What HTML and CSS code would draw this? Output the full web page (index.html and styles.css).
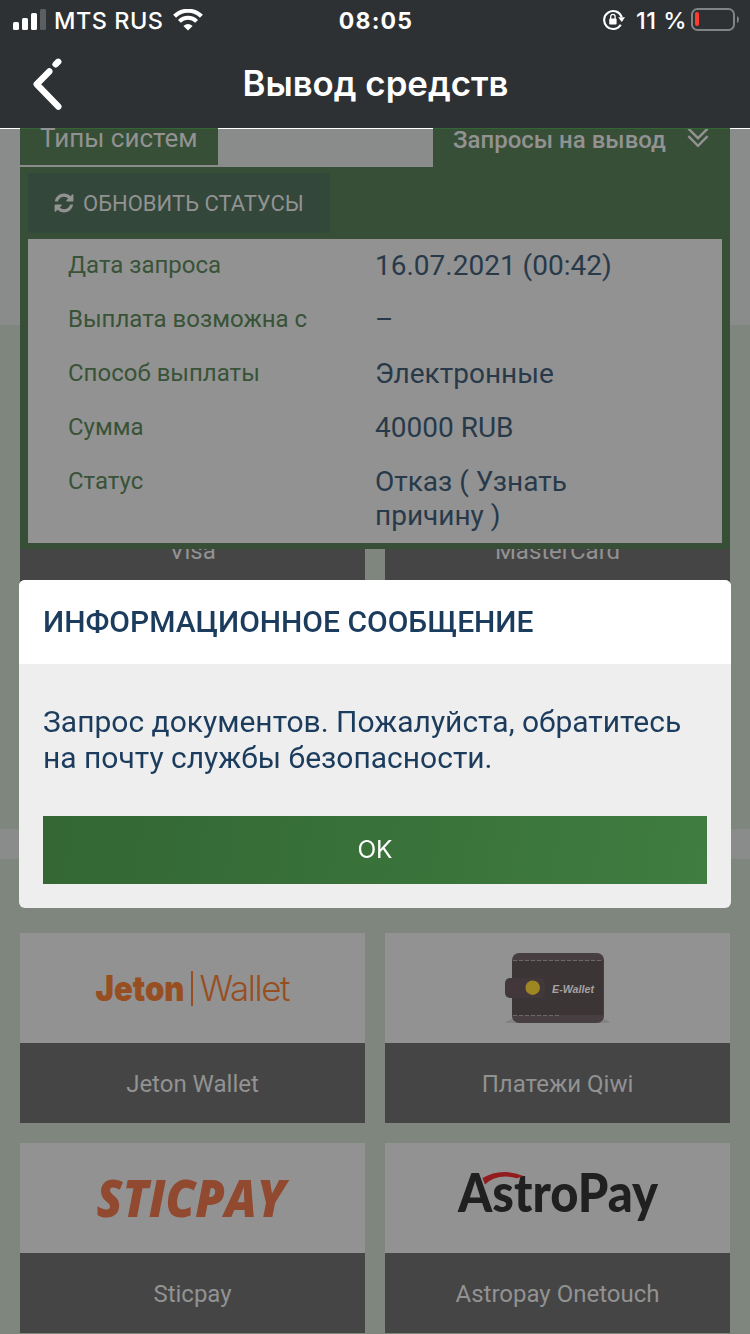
FILE: index.html
```
<!DOCTYPE html>
<html lang="ru">
<head>
  <meta charset="utf-8">
  <title>Вывод средств</title>
  <link rel="stylesheet" href="styles.css">
</head>
<body>
  <header class="header">
    <div class="status">
      <div class="status-left">
        <svg class="signal" width="34" height="22" viewBox="0 0 34 22">
          <rect x="0" y="13" width="6" height="8" rx="1.5" fill="#fff"/>
          <rect x="9" y="9" width="6" height="12" rx="1.5" fill="#fff"/>
          <rect x="18" y="4" width="6" height="17" rx="1.5" fill="#fff"/>
          <rect x="27" y="0" width="6" height="21" rx="1.5" fill="#5b5f61"/>
        </svg>
        <span class="carrier">MTS RUS</span>
        <svg class="wifi" width="30" height="22" viewBox="0 0 30 22" fill="none" stroke="#fff">
          <path d="M1.6 7.3 A19 19 0 0 1 28.4 7.3" stroke-width="4.2"/>
          <path d="M6.4 12.3 A12.2 12.2 0 0 1 23.6 12.3" stroke-width="4"/>
          <path d="M15 21.6 L10.4 17 Q15 12.9 19.6 17 Z" fill="#fff" stroke="none"/>
        </svg>
      </div>
      <div class="clock">08:05</div>
      <div class="status-right">
        <svg class="lock" width="22" height="22" viewBox="0 0 22 22">
          <path d="M17.8 15.8 A9 9 0 1 1 18.7 8.2" fill="none" stroke="#fff" stroke-width="2.1"/>
          <path d="M15.2 8.3 L22 8.3 L18.8 13 Z" fill="#fff"/>
          <rect x="6.2" y="9.4" width="7.4" height="6" rx="1" fill="#fff"/>
          <path d="M7.7 10 V7.6 a2.2 2.2 0 0 1 4.4 0 V10" fill="none" stroke="#fff" stroke-width="1.3"/>
        </svg>
        <span class="percent">11 %</span>
        <svg class="battery" width="48" height="24" viewBox="0 0 48 24">
          <rect x="1" y="1" width="42" height="21" rx="5.5" fill="none" stroke="#818485" stroke-width="2"/>
          <rect x="4" y="4" width="4" height="14" rx="2" fill="#fd3c2f"/>
          <path d="M46 8 q2 1 2 3.5 t-2 3.5z" fill="#818485"/>
        </svg>
      </div>
    </div>
    <div class="nav">
      <svg class="back" width="30" height="52" viewBox="0 0 30 52" fill="none" stroke="#fff" stroke-width="6.4" stroke-linecap="round" stroke-linejoin="round">
        <path d="M16.3 13.4 L3.7 26.3 L25.3 48.6"/>
        <path d="M22.7 6.3 L25.2 3.8"/>
      </svg>
      <h1 class="title">Вывод средств</h1>
    </div>
  </header>

  <main class="page">
    <div class="requests">
      <div class="tabs">
        <div class="tab">Типы систем</div>
        <div class="tab tab-active">
          <span>Запросы на вывод</span>
          <svg width="22" height="19" viewBox="0 1 22 19" fill="none" stroke="#929292" stroke-width="2.4">
            <path d="M1.4 0.6 L11 10.2 L20.6 0.6"/>
            <path d="M1.4 8.2 L11 17.8 L20.6 8.2"/>
          </svg>
        </div>
      </div>
      <div class="panel">
        <div class="refresh">
          <svg width="20" height="22" viewBox="0 0 1536 1792" fill="#929292">
            <path d="M1511 1056q0 5-1 7-64 268-268 434.5t-478 166.5q-146 0-282.5-55t-243.5-157l-129 129q-19 19-45 19t-45-19-19-45v-448q0-26 19-45t45-19h448q26 0 45 19t19 45-19 45l-137 137q71 66 161 102t187 36q134 0 250-65t186-179q11-17 53-117 8-23 30-23h192q13 0 22.5 9.5t9.5 22.5zm25-800v448q0 26-19 45t-45 19h-448q-26 0-45-19t-19-45 19-45l138-138q-148-137-349-137-134 0-250 65t-186 179q-11 17-53 117-8 23-30 23h-199q-13 0-22.5-9.5t-9.5-22.5v-7q65-268 270-434.5t480-166.5q146 0 284 55.5t245 156.5l130-129q19-19 45-19t45 19 19 45z"/>
          </svg>
          <span>ОБНОВИТЬ СТАТУСЫ</span>
        </div>
        <div class="info">
          <div class="row"><div class="label">Дата запроса</div><div class="value">16.07.2021 (00:42)</div></div>
          <div class="row"><div class="label">Выплата возможна с</div><div class="value">–</div></div>
          <div class="row"><div class="label">Способ выплаты</div><div class="value">Электронные</div></div>
          <div class="row"><div class="label">Сумма</div><div class="value">40000 RUB</div></div>
          <div class="row"><div class="label">Статус</div><div class="value">Отказ ( Узнать причину )</div></div>
        </div>
      </div>
    </div>

    <section class="systems cards-bank">
      <div class="card">
        <div class="logo"></div>
        <div class="name">Visa</div>
      </div>
      <div class="card">
        <div class="logo"></div>
        <div class="name">MasterCard</div>
      </div>
    </section>

    <section class="systems wallets">
      <div class="card">
        <div class="logo">
          <svg width="345" height="110" viewBox="0 0 345 110" fill="#974f22">
            <text class="jeton-bold" x="75.5" y="68" textLength="89" lengthAdjust="spacingAndGlyphs">Jeton</text>
            <rect x="171" y="38" width="2" height="35"/>
            <text class="jeton-thin" x="179.5" y="68" textLength="91" lengthAdjust="spacing">Wallet</text>
          </svg>
        </div>
        <div class="name">Jeton Wallet</div>
      </div>
      <div class="card">
        <div class="logo">
          <svg width="345" height="110" viewBox="0 0 345 110">
            <path d="M120 90 q3 -4 10 -4 h85 q8 0 10 4z" fill="#838383"/>
            <rect x="127" y="20" width="92" height="70" rx="7" fill="#473e41"/>
            <rect x="127" y="28" width="91" height="54" fill="#3c3536"/>
            <path d="M128 27.5 H218 M128 82.5 H175" stroke="#6d6769" stroke-width="1" stroke-dasharray="4 2"/>
            <rect x="120" y="45" width="40" height="20" rx="5" fill="#42383b"/>
            <circle cx="147.7" cy="54.7" r="7.2" fill="#9c8723"/>
            <text class="ewallet" x="167" y="60" fill="#a5a3a3" textLength="42" lengthAdjust="spacingAndGlyphs">E-Wallet</text>
          </svg>
        </div>
        <div class="name">Платежи Qiwi</div>
      </div>
      <div class="card">
        <div class="logo">
          <svg width="345" height="110" viewBox="0 0 345 110">
            <text class="sticpay" x="76.5" y="73.5" fill="#91492f" textLength="189" lengthAdjust="spacingAndGlyphs">STICPAY</text>
          </svg>
        </div>
        <div class="name">Sticpay</div>
      </div>
      <div class="card">
        <div class="logo">
          <svg width="345" height="110" viewBox="0 0 345 110">
            <text class="astropay" x="73" y="69" fill="#202020" textLength="200" lengthAdjust="spacingAndGlyphs">AstroPay</text>
            <path d="M97.5 35 Q116 24 138.5 33 L132 35.2 Q112 30 100 41.5 Z" fill="#921c1e"/>
          </svg>
        </div>
        <div class="name">Astropay Onetouch</div>
      </div>
    </section>
  </main>

  <div class="overlay">
    <div class="modal">
      <div class="modal-title">ИНФОРМАЦИОННОЕ СООБЩЕНИЕ</div>
      <div class="modal-body">
        <p class="message">Запрос документов. Пожалуйста, обратитесь на почту службы безопасности.</p>
        <button class="ok">OK</button>
      </div>
    </div>
  </div>
</body>
</html>
```
FILE: styles.css
```
* {
    box-sizing: border-box;
    margin: 0;
    padding: 0;
}

body {
    width: 750px;
    height: 1334px;
    overflow: hidden;
    display: flex;
    flex-direction: column;
    font-family: Roboto, "Noto Sans", sans-serif;
    background-color: #898c8a;
}

.header {
    height: 128px;
    flex-shrink: 0;
    background-color: #2d3134;
    color: white;
    font-family: Inter, sans-serif;
}

.status {
    height: 40px;
    display: grid;
    grid-template-columns: 1fr auto 1fr;
    align-items: center;
    padding: 0 11px 0 13px;
    font-size: 23.5px;
    font-weight: 500;
}

.status-left {
    display: flex;
    align-items: center;
}

.carrier {
    margin-left: 7px;
    letter-spacing: 0.5px;
}

.wifi {
    margin-left: 9px;
}

.clock {
    padding-top: 2px;
    font-size: 23px;
    font-weight: 700;
    letter-spacing: 1.2px;
}

.status-right {
    display: flex;
    align-items: center;
    justify-content: flex-end;
}

.percent {
    margin: 0 4px 0 11px;
    letter-spacing: 0.5px;
}

.nav {
    height: 88px;
    display: grid;
    grid-template-columns: 30px 1fr 30px;
    align-items: center;
    padding: 0 32px 0 33px;
}

.title {
    padding-bottom: 2px;
    font-size: 34.8px;
    font-weight: 600;
    text-align: center;
}

.page {
    height: 1206px;
    position: relative;
    border-top: 1px solid white;
}

/* выпадающий блок поверх списка систем */
.requests {
    position: absolute;
    top: -1px;
    left: 20px;
    width: 710px;
}

.tabs {
    display: flex;
    justify-content: space-between;
    align-items: flex-start;
}

.tab {
    width: 198px;
    height: 37px;
    padding-left: 20px;
    border-top: 1px solid #336633;
    background-color: #384f37;
    color: #929292;
    font-size: 26px;
    line-height: 19px;
}

.tab-active {
    width: 297px;
    height: 39px;
    display: flex;
    justify-content: space-between;
    padding-right: 21px;
    font-size: 24px;
    line-height: 23px;
    font-weight: 500;
}

.panel {
    height: 382px;
    padding: 6px 8px;
    background-color: #384f37;
}

.refresh {
    width: 302px;
    height: 60px;
    display: flex;
    align-items: center;
    gap: 9px;
    padding-left: 26px;
    background-color: #34473b;
    color: #929292;
    font-size: 22px;
}

.info {
    height: 304px;
    margin-top: 6px;
    background-color: #929292;
}

.row {
    display: flex;
    padding: 10px 0 10px 40px;
    line-height: 34px;
}

.label {
    width: 307px;
    color: #385337;
    font-size: 24px;
    line-height: 32px;
}

.value {
    width: 250px;
    color: #283a4a;
    font-size: 28px;
}

.systems {
    display: grid;
    grid-template-columns: 345px 345px;
    gap: 20px;
    align-content: start;
    padding: 0 20px;
    background-color: #7f867d;
}

.cards-bank {
    height: 504px;
    margin-top: 196px;
    padding-top: 75px;
}

.wallets {
    height: 475px;
    margin-top: 30px;
    padding-top: 74px;
}

.logo {
    height: 110px;
    background-color: #929292;
}

.logo svg {
    display: block;
}

.name {
    height: 80px;
    background-color: #454545;
    color: #929292;
    font-size: 24px;
    line-height: 82px;
    text-align: center;
}

.jeton-bold {
    font: 900 35px Inter, sans-serif;
}

.jeton-thin {
    font: 300 35px Inter, sans-serif;
}

.ewallet {
    font: italic 700 11px "Liberation Sans", sans-serif;
}

.sticpay {
    font: italic 800 52px "Open Sans", sans-serif;
}

.astropay {
    font: 900 54px Lato, sans-serif;
}

/* информационное сообщение */
.overlay {
    position: fixed;
    top: 580px;
    left: 19px;
}

.modal {
    width: 712px;
    height: 328px;
    border-radius: 6px;
    overflow: hidden;
    background-color: #eeeeee;
    color: #1c3c5e;
}

.modal-title {
    height: 84px;
    padding-left: 24px;
    background-color: white;
    font-size: 30px;
    font-weight: 500;
    line-height: 84px;
}

.modal-body {
    padding: 40px 24px 24px;
}

.message {
    font-size: 30px;
    line-height: 36px;
}

.ok {
    display: block;
    width: 100%;
    height: 68px;
    margin-top: 40px;
    padding-bottom: 2px;
    border: none;
    background: linear-gradient(100deg, #336633, #3f7d40);
    color: white;
    font-family: Inter, sans-serif;
    font-size: 24.5px;
}
```
